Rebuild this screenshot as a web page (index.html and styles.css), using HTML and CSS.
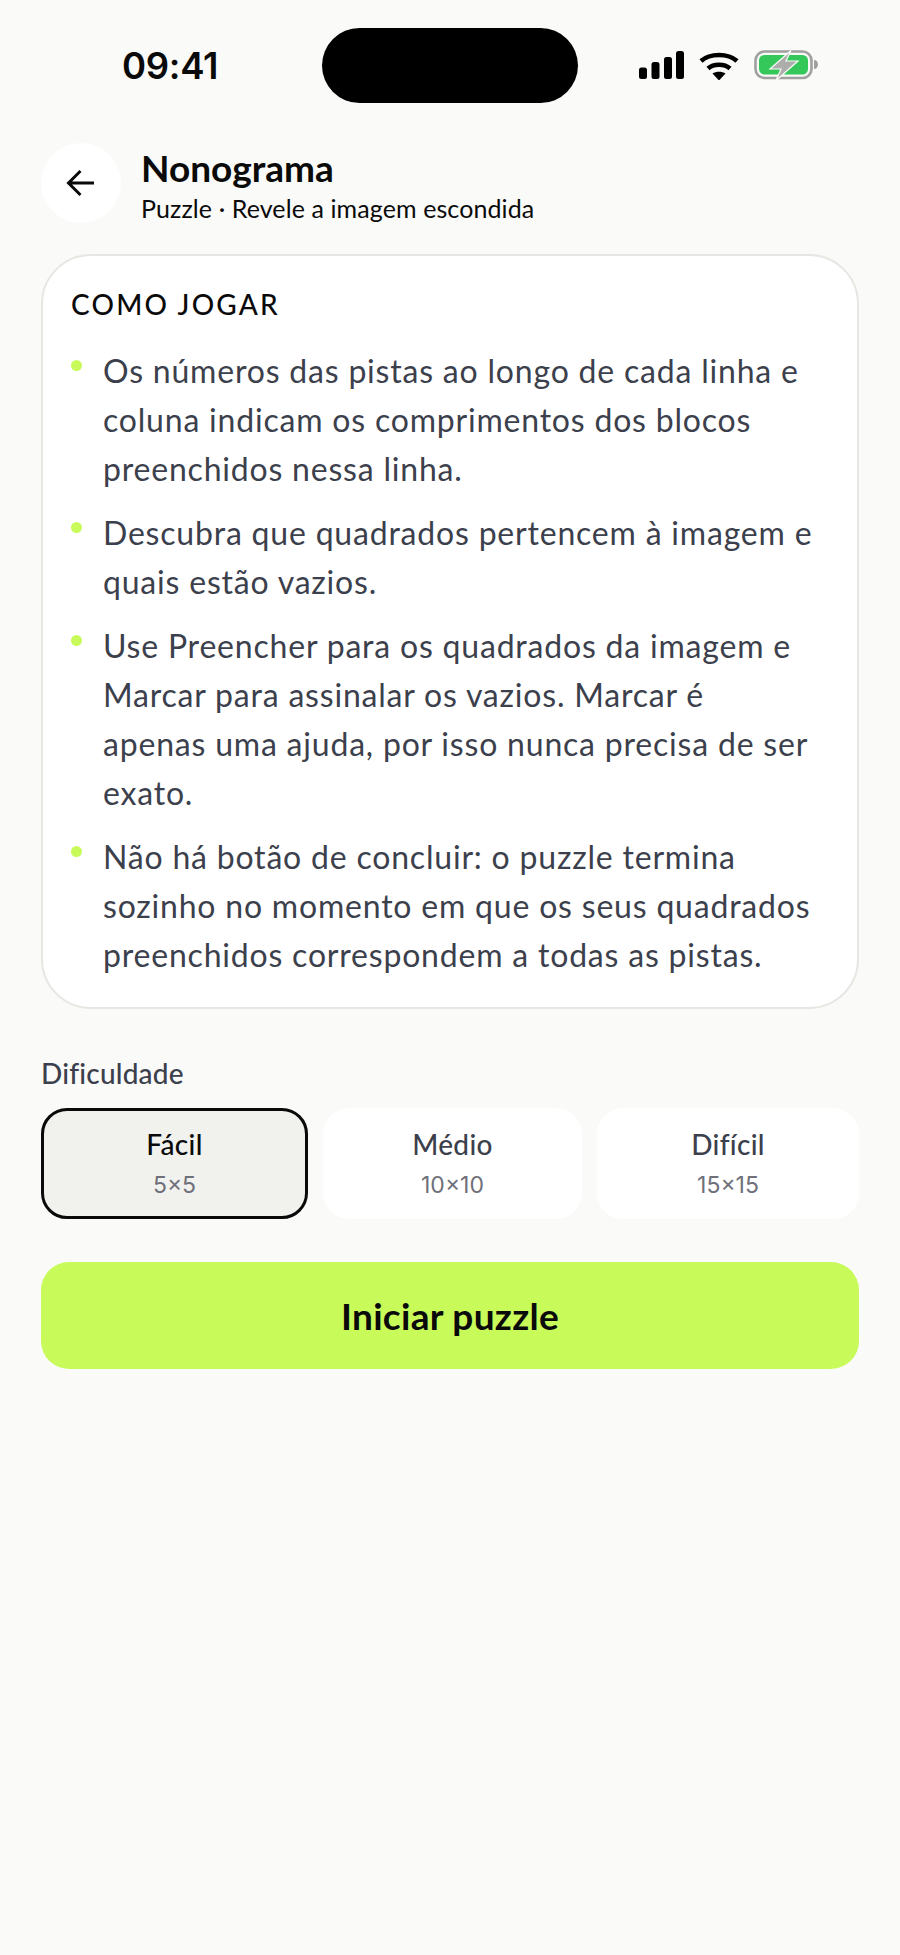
FILE: index.html
```html
<!DOCTYPE html>
<html lang="pt">
<head>
  <meta charset="UTF-8" />
  <meta name="viewport" content="width=device-width, initial-scale=1" />
  <title>Nonograma</title>
  <link rel="stylesheet" href="styles.css" />
</head>
<body>
  <!-- Status bar -->
  <div class="status-bar">
    <span class="time">09:41</span>
    <div class="island"></div>
    <div class="status-icons">
      <svg class="icon-signal" width="45" height="29" viewBox="0 0 45 29" aria-hidden="true">
        <rect x="0" y="16.5" width="8" height="11.5" rx="2.5" />
        <rect x="12.5" y="11" width="8" height="17" rx="2.5" />
        <rect x="25" y="6" width="8" height="22" rx="2.5" />
        <rect x="37" y="0" width="8" height="28" rx="2.5" />
      </svg>
      <svg class="icon-wifi" width="40" height="29" viewBox="0 0 40 29" aria-hidden="true">
        <path class="arc" d="M2 10 C11 2 29 2 38 10" />
        <path class="arc" d="M9 17.5 C14.500 12.500 25.500 12.500 31 17.500" />
        <path d="M13.500 22.500 C17 20 23 20 26.500 22.500 L20 29.500 Z" />
      </svg>
      <svg class="icon-battery" width="64" height="31" viewBox="0 0 64 31" aria-hidden="true">
        <rect class="shell" x="1.500" y="1.500" width="56" height="26.500" rx="9" />
        <rect class="charge" x="5" y="5" width="49" height="19.500" rx="5.500" />
        <path class="nub" d="M60 10 C62.500 10 64 12 64 14.500 C64 17 62.500 19 60 19 Z" />
        <path class="bolt" d="M37 0.500 L16 19 H27 L22 30.500 L44 11 H32 Z" />
      </svg>
    </div>
  </div>

  <main class="page">
    <!-- Header -->
    <header class="top">
      <button class="back" aria-label="Voltar">
        <svg width="30" height="28" viewBox="0 0 30 28" aria-hidden="true">
          <path d="M28 14 H3 M14.500 2 L2.500 14 L14.500 26" />
        </svg>
      </button>
      <div class="top-text">
        <h1>Nonograma</h1>
        <p>Puzzle · Revele a imagem escondida</p>
      </div>
    </header>

    <!-- How to play -->
    <section class="card">
      <h2>COMO JOGAR</h2>
      <ul class="rules">
        <li><span class="dot"></span><span>Os números das pistas ao longo de cada linha e coluna indicam os comprimentos dos blocos preenchidos nessa linha.</span></li>
        <li><span class="dot"></span><span>Descubra que quadrados pertencem à imagem e quais estão vazios.</span></li>
        <li><span class="dot"></span><span>Use Preencher para os quadrados da imagem e Marcar para assinalar os vazios. Marcar é apenas uma ajuda, por isso nunca precisa de ser exato.</span></li>
        <li><span class="dot"></span><span>Não há botão de concluir: o puzzle termina sozinho no momento em que os seus quadrados preenchidos correspondem a todas as pistas.</span></li>
      </ul>
    </section>

    <!-- Difficulty -->
    <h3 class="diff-label">Dificuldade</h3>
    <div class="diff-row">
      <button class="chip selected"><strong>Fácil</strong><small>5×5</small></button>
      <button class="chip"><strong>Médio</strong><small>10×10</small></button>
      <button class="chip"><strong>Difícil</strong><small>15×15</small></button>
    </div>

    <button class="start">Iniciar puzzle</button>
  </main>
</body>
</html>
```

FILE: styles.css
```css
/* Global */
* {
  box-sizing: border-box;
}
body {
  margin: 0;
  min-height: 1955px;
  background: #FAFAF8;
  color: #0A0A0A;
  font-family: 'Lato', 'Liberation Sans', sans-serif;
}
button {
  font-family: inherit;
  border: none;
  padding: 0;
}

/* Status bar */
.status-bar {
  display: grid;
  grid-template-columns: 322px 256px 322px;
  align-items: center;
  padding-top: 28px;
}
.time {
  padding-left: 122px;
  font-family: 'Inter', 'Liberation Sans', sans-serif;
  font-size: 36.5px;
  font-weight: 600;
  letter-spacing: -0.3px;
}
.island {
  height: 75px;
  border-radius: 38px;
  background: #000;
}
.status-icons {
  display: flex;
  align-items: center;
  padding-left: 61px;
}
.icon-signal {
  fill: #000;
  margin-right: 15px;
}
.icon-wifi {
  fill: #000;
  margin-right: 15px;
}
.icon-wifi .arc {
  fill: none;
  stroke: #000;
  stroke-width: 4.6;
}
.icon-battery .shell {
  fill: none;
  stroke: #A0A0A0;
  stroke-width: 2.6;
}
.icon-battery .charge {
  fill: #34C759;
}
.icon-battery .nub {
  fill: #A0A0A0;
}
.icon-battery .bolt {
  fill: #ADADAB;
  stroke: #FAFAF8;
  stroke-width: 1.2;
}

/* Page column */
.page {
  padding: 40px 41px 0 41px;
}

/* Header */
.top {
  display: flex;
  align-items: flex-start;
  gap: 20px;
  height: 80px;
}
.back {
  width: 80px;
  height: 80px;
  border-radius: 50%;
  background: #FFF;
  display: flex;
  align-items: center;
  justify-content: center;
  flex-shrink: 0;
}
.back path {
  fill: none;
  stroke: #0A0A0A;
  stroke-width: 3;
}
.top-text {
  padding-top: 4px;
}
.top-text h1 {
  margin: 0;
  font-size: 37px;
  line-height: 42px;
  font-weight: 700;
}
.top-text p {
  margin: 0;
  font-size: 25px;
  line-height: 38px;
  letter-spacing: 0.1px;
}

/* Card */
.card {
  margin-top: 31px;
  background: #FFF;
  border: 2px solid #E6E6E2;
  border-radius: 50px;
  padding: 28px 43px 28px 28px;
}
.card h2 {
  margin: 0 0 22px 0;
  font-size: 28px;
  line-height: 40px;
  font-weight: 500;
  letter-spacing: 2.2px;
}
.rules {
  list-style: none;
  margin: 0;
  padding: 0;
  display: flex;
  flex-direction: column;
  gap: 15px;
}
.rules li {
  display: flex;
  gap: 21px;
  font-size: 32px;
  line-height: 49px;
  letter-spacing: 0.8px;
  color: #3C3F4C;
}
.dot {
  flex-shrink: 0;
  width: 11px;
  height: 11px;
  margin-top: 14px;
  border-radius: 50%;
  background: #C8FB5A;
}

/* Difficulty */
.diff-label {
  margin: 46px 0 0 0;
  font-size: 28px;
  line-height: 36px;
  font-weight: 500;
  letter-spacing: 0.2px;
  color: #3C3F4C;
}
.diff-row {
  display: grid;
  grid-template-columns: 267px 259px 262px;
  gap: 15px;
  margin-top: 17px;
}
.chip {
  height: 111px;
  border-radius: 26px;
  background: #FFF;
  display: flex;
  flex-direction: column;
  align-items: center;
  justify-content: center;
  gap: 11px;
  color: #3C3F4C;
}
.chip strong {
  font-size: 28px;
  line-height: 32px;
  font-weight: 500;
  letter-spacing: 0.3px;
}
.chip small {
  font-family: 'Inter', 'Liberation Sans', sans-serif;
  font-size: 23px;
  line-height: 28px;
  color: #6E707A;
}
.chip.selected {
  background: #F1F1EE;
  border: 3px solid #0A0A0A;
  color: #0A0A0A;
}

/* Start button */
.start {
  display: block;
  width: 818px;
  height: 107px;
  margin-top: 43px;
  border-radius: 28px;
  background: #C8FB5A;
  color: #0A0A0A;
  font-size: 37px;
  font-weight: 700;
  letter-spacing: 0.3px;
}
```
